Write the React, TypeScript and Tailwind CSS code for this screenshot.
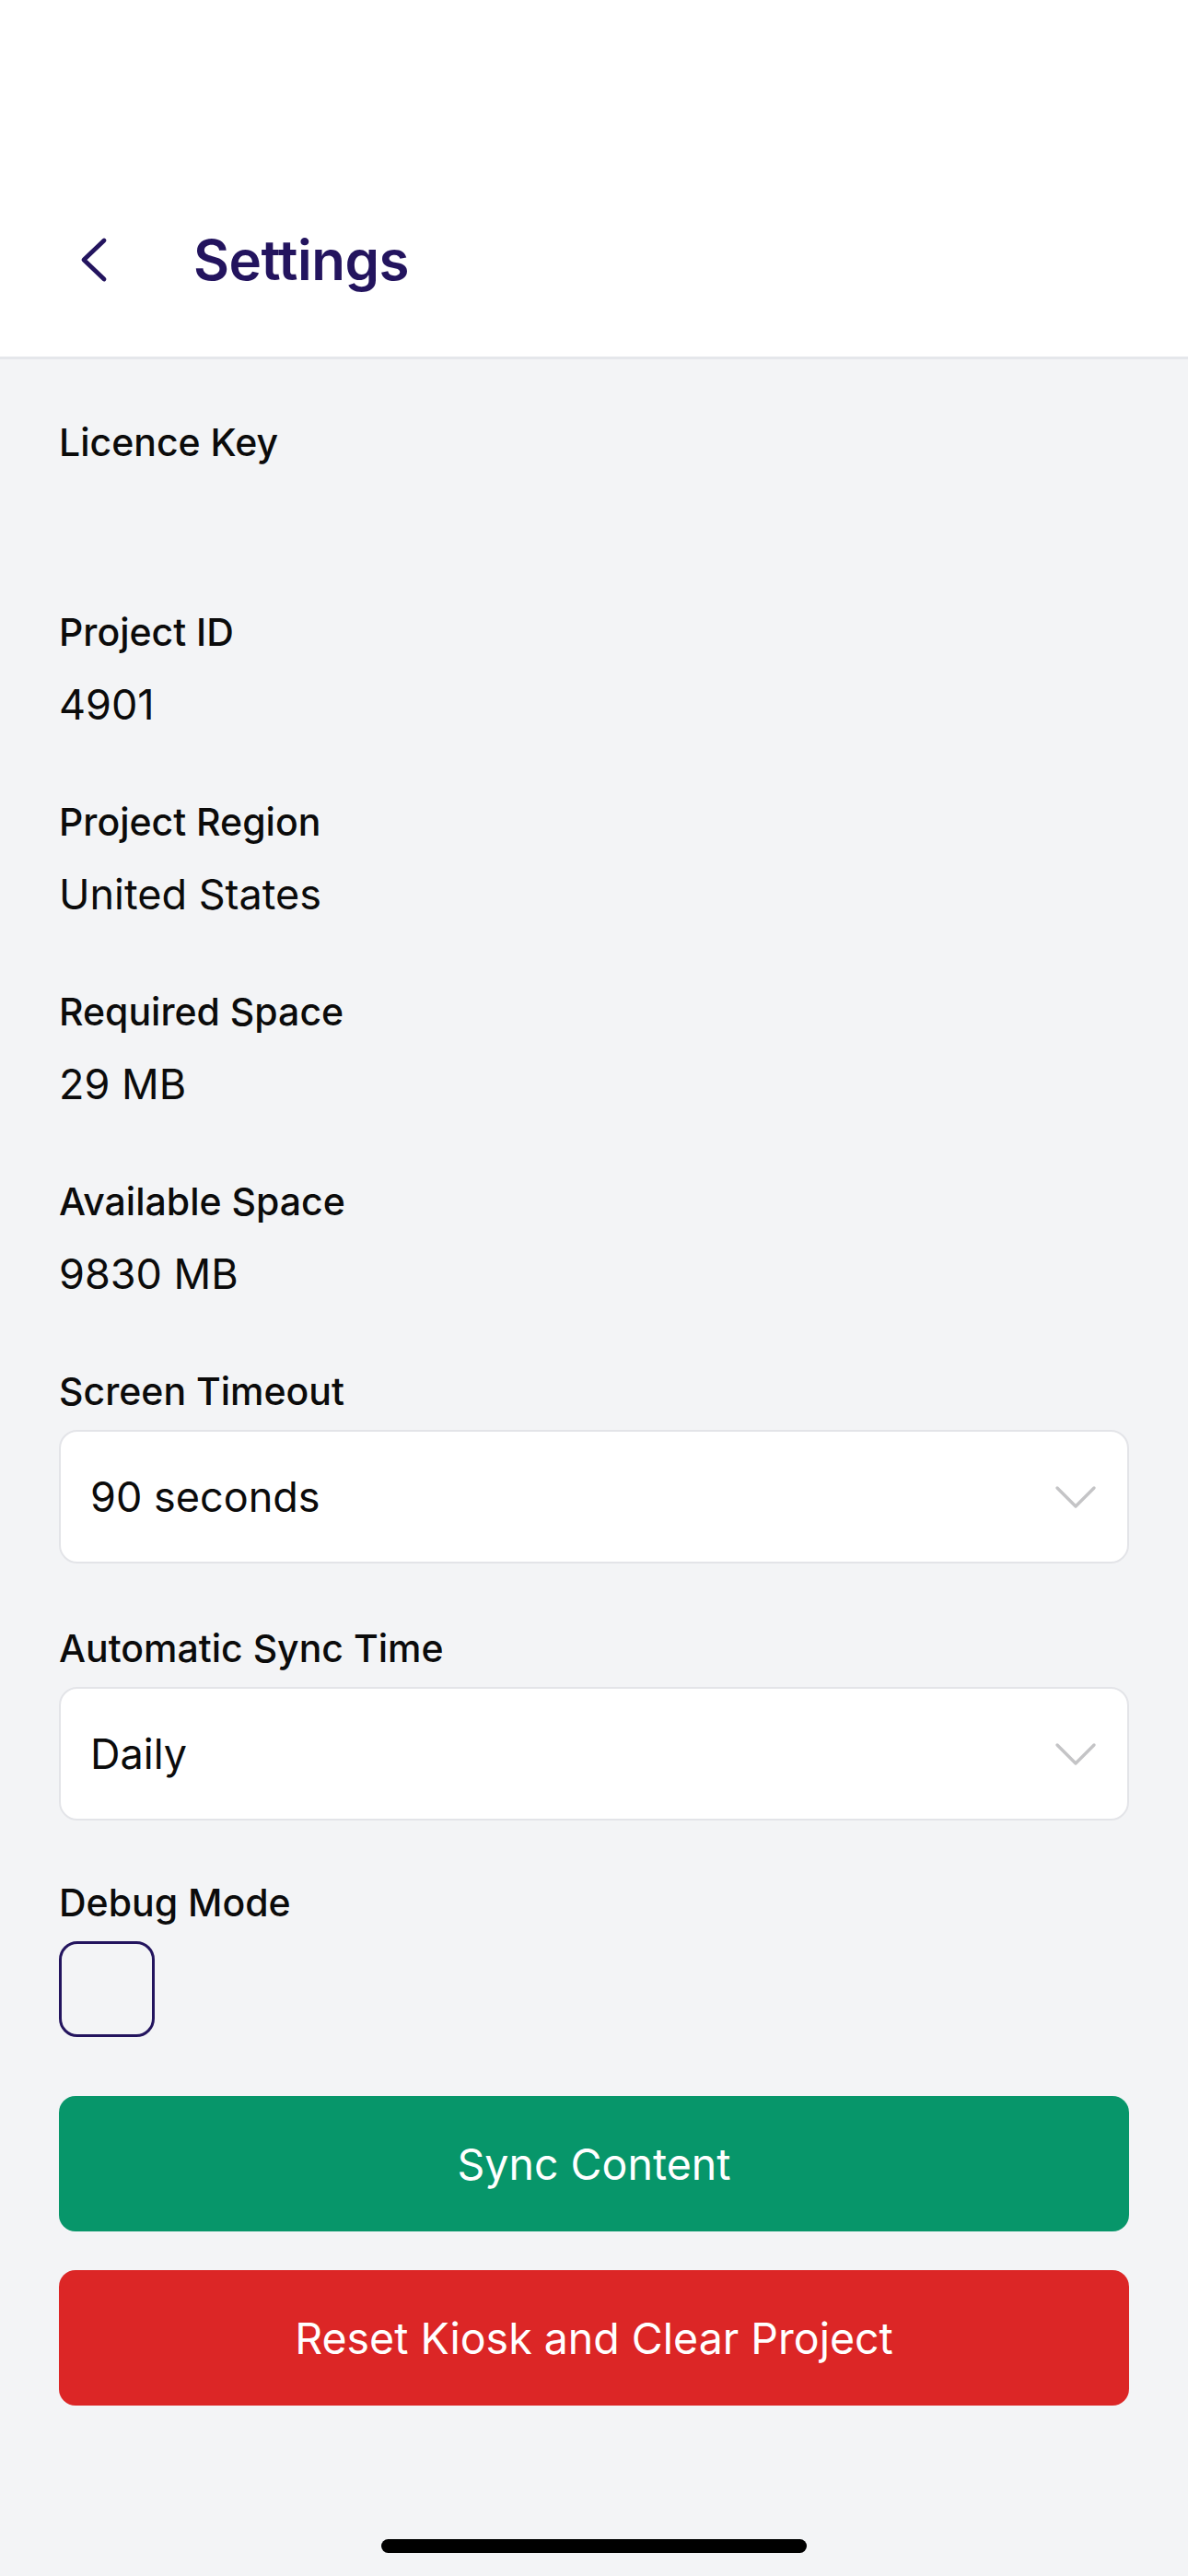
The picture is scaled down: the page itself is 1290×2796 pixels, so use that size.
import React from "react";

const font = { fontFamily: 'Inter, "Noto Sans", "Liberation Sans", sans-serif' };

function ChevronLeft() {
  return (
    <svg width="32" height="50" viewBox="0 0 32 50" fill="none">
      <path
        d="M27 4 L5 25 L27 46"
        stroke="#23145e"
        strokeWidth="4.8"
        strokeLinecap="round"
        strokeLinejoin="round"
      />
    </svg>
  );
}

function ChevronDown() {
  return (
    <svg width="46" height="26" viewBox="0 0 46 26" fill="none">
      <path
        d="M3 3 L23 23 L43 3"
        stroke="#c4c4c6"
        strokeWidth="3.4"
        strokeLinecap="round"
        strokeLinejoin="round"
      />
    </svg>
  );
}

function InfoField({ label, value }: { label: string; value: string }) {
  return (
    <div className="flex flex-col mb-[74px]">
      <div className="text-[41px] leading-[50px] font-medium text-[#0b0b0b]">{label}</div>
      <div className="mt-[26px] h-[56px] text-[45px] leading-[56px] text-[#0b0b0b]">{value}</div>
    </div>
  );
}

function SelectField({ label, value, gapAfter }: { label: string; value: string; gapAfter: string }) {
  return (
    <div className={`flex flex-col ${gapAfter}`}>
      <div className="text-[41px] leading-[50px] font-medium text-[#0b0b0b]">{label}</div>
      <div className="mt-[17px] h-[145px] rounded-[20px] border-[2.5px] border-[#e3e4e8] bg-white flex items-center justify-between pl-[32px] pr-[33px]">
        <span className="text-[45px] leading-[56px] text-[#0b0b0b]">{value}</span>
        <ChevronDown />
      </div>
    </div>
  );
}

export default function App() {
  return (
    <div className="min-h-screen bg-[#f3f4f6] flex flex-col" style={font}>
      <header className="h-[390px] bg-white border-b-[3px] border-[#e5e7eb] pt-[230px]">
        <div className="h-[104px] flex items-center pl-[86px]">
          <ChevronLeft />
          <h1 className="ml-[92px] text-[60px] font-semibold text-[#23145e] tracking-[-0.5px]">Settings</h1>
        </div>
      </header>

      <main className="px-[64px] pt-[65px] flex flex-col">
        <InfoField label="Licence Key" value="" />
        <InfoField label="Project ID" value="4901" />
        <InfoField label="Project Region" value="United States" />
        <InfoField label="Required Space" value="29 MB" />
        <InfoField label="Available Space" value="9830 MB" />

        <SelectField label="Screen Timeout" value="90 seconds" gapAfter="mb-[67px]" />
        <SelectField label="Automatic Sync Time" value="Daily" gapAfter="mb-[64px]" />

        <div className="flex flex-col">
          <div className="text-[41px] leading-[50px] font-medium text-[#0b0b0b]">Debug Mode</div>
          <button
            type="button"
            aria-label="Debug Mode"
            className="mt-[17px] w-[104px] h-[104px] rounded-[20px] border-[3px] border-[#23145e] bg-transparent"
          />
        </div>

        <button
          type="button"
          className="mt-[64px] h-[147px] w-full rounded-[18px] bg-[#07966a] text-white text-[46.5px] leading-[56px]"
        >
          Sync Content
        </button>
        <button
          type="button"
          className="mt-[42px] h-[147px] w-full rounded-[18px] bg-[#dc2626] text-white text-[46.5px] leading-[56px]"
        >
          Reset Kiosk and Clear Project
        </button>

        <div className="mt-[145px] mb-[24px] flex justify-center">
          <div className="w-[462px] h-[15px] rounded-full bg-black" />
        </div>
      </main>
    </div>
  );
}
